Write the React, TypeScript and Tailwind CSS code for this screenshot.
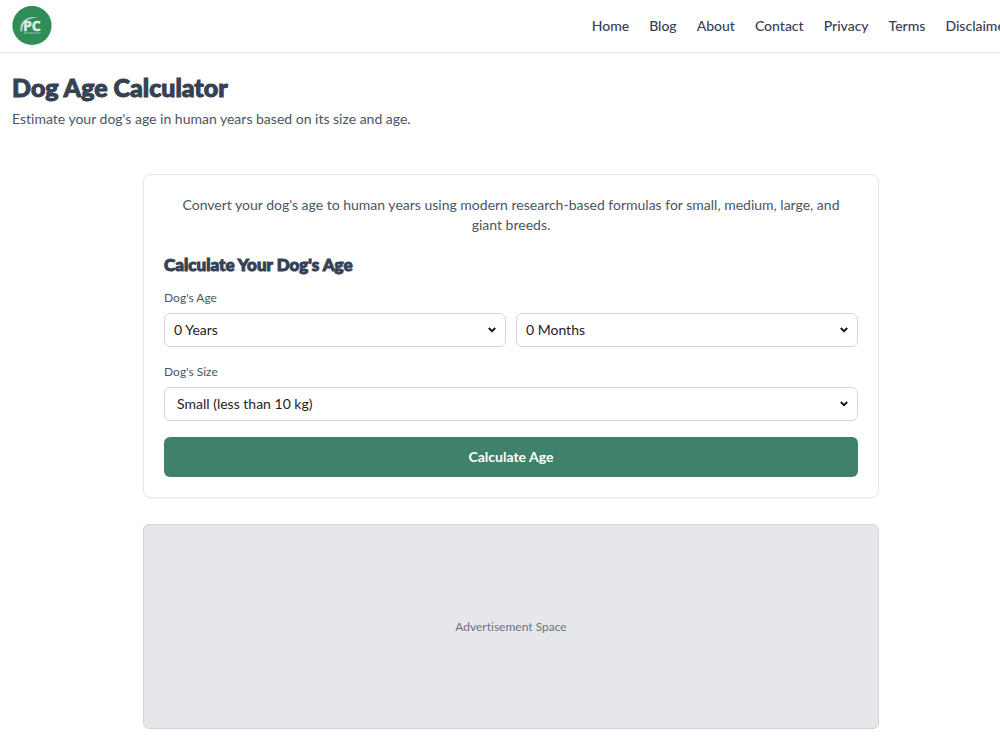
import { useId, useState } from "react";

const links = ["Home", "Blog", "About", "Contact", "Privacy", "Terms", "Disclaimer"];
const years = Array.from({ length: 26 }, (_, i) => `${i} Years`);
const months = Array.from({ length: 12 }, (_, i) => `${i} Months`);
const sizes = [
    "Small (less than 10 kg)",
    "Medium (10 - 25 kg)",
    "Large (25 - 45 kg)",
    "Giant (more than 45 kg)",
];

const Logo = () => (
    <svg viewBox="0 0 40 40" className="size-10" role="img" aria-label="PC logo">
        <circle cx="20" cy="19.5" r="19.6" fill="#2f8d58" />
        <path d="M8.5 25.5C7 16 15 8.5 27 12C17 10.8 10 16 10.2 25Z" fill="#b5d6c4" />
        <text x="11" y="24.5" fontFamily="Open Sans, sans-serif" fontWeight="700" fontSize="14" fill="#e0e8e4" stroke="#e0e8e4" strokeWidth=".5">PC</text>
        <path d="M12 27H28.5" stroke="#a5cdb7" strokeWidth="1.1" strokeDasharray="3 .6 1.6 .5" />
    </svg>
);

type SelectProps = {
    id: string;
    label?: string;
    options: string[];
    className: string;
};

const Select = ({ id, label, options, className }: SelectProps) => {
    const [value, setValue] = useState(options[0]);

    return (
        <div className="relative">
            <select
            id={id}
            aria-label={label}
            value={value}
            onChange={(e) => setValue(e.target.value)}
            className={`block h-[34px] w-full appearance-none rounded-md border border-gray-300 bg-white text-sm text-[#1d1d1f] ${className}`}
            >
                {options.map((o) => <option key={o}>{o}</option>)}
            </select>
            <svg viewBox="0 0 8 6" className="pointer-events-none absolute right-2.5 top-3.5 h-1.5 w-2" fill="none" stroke="#111" strokeWidth="1.8">
                <path d="M.8 1L4 4.2L7.2 1" />
            </svg>
        </div>
    );
};

const App = () => {
    const id = useId();

    return (
        <div className="overflow-x-hidden bg-white font-['Lato',sans-serif] text-sm text-gray-600 [font-variant-ligatures:none]">
            <div className="min-w-[1022px]">
                <header className="flex h-[53px] items-center justify-between border-b border-gray-200 px-3 shadow-xs">
                    <a href="#home"><Logo /></a>
                    <nav className="flex gap-5 font-medium text-gray-700">
                        {links.map((l) => <a key={l} href={`#${l.toLowerCase()}`}>{l}</a>)}
                    </nav>
                </header>
                <div className="px-3 pt-[18px]">
                    <h1 className="text-[25px] leading-8 font-black text-gray-700 [-webkit-text-stroke:1px]">Dog Age Calculator</h1>
                    <p className="mt-1 leading-6">Estimate your dog's age in human years based on its size and age.</p>
                </div>
                <main className="mx-auto mt-[43px] w-[72%] max-w-[736px] pb-6">
                    <section className="rounded-lg border border-gray-200 p-5 shadow-xs">
                        <p className="px-2 text-center leading-5">
                            Convert your dog's age to human years using modern research-based formulas for small, medium, large, and giant breeds.
                        </p>
                        <h2 className="mt-4 text-[17px] leading-7 font-black text-gray-700 [-webkit-text-stroke:1px]">Calculate Your Dog's Age</h2>
                        <form onSubmit={(e) => e.preventDefault()} className="mt-[11px]">
                            <label htmlFor={`${id}-years`} className="mb-[7px] block text-xs leading-4">Dog's Age</label>
                            <div className="grid grid-cols-2 gap-2.5">
                                <Select id={`${id}-years`} options={years} className="px-[9px]" />
                                <Select id={`${id}-months`} label="Months" options={months} className="px-[9px]" />
                            </div>
                            <label htmlFor={`${id}-size`} className="mt-[17px] mb-[7px] block text-xs leading-4">Dog's Size</label>
                            <Select id={`${id}-size`} options={sizes} className="px-3" />
                            <button className="mt-4 block h-10 w-full rounded-md bg-[#3e826b] font-bold text-white">
                                Calculate Age
                            </button>
                        </form>
                    </section>
                    <aside className="mt-[26px] flex h-[205px] items-center justify-center rounded-md border border-gray-300 bg-gray-200 text-xs text-gray-500">
                        Advertisement Space
                    </aside>
                </main>
            </div>
        </div>
    );
};

export default App;
